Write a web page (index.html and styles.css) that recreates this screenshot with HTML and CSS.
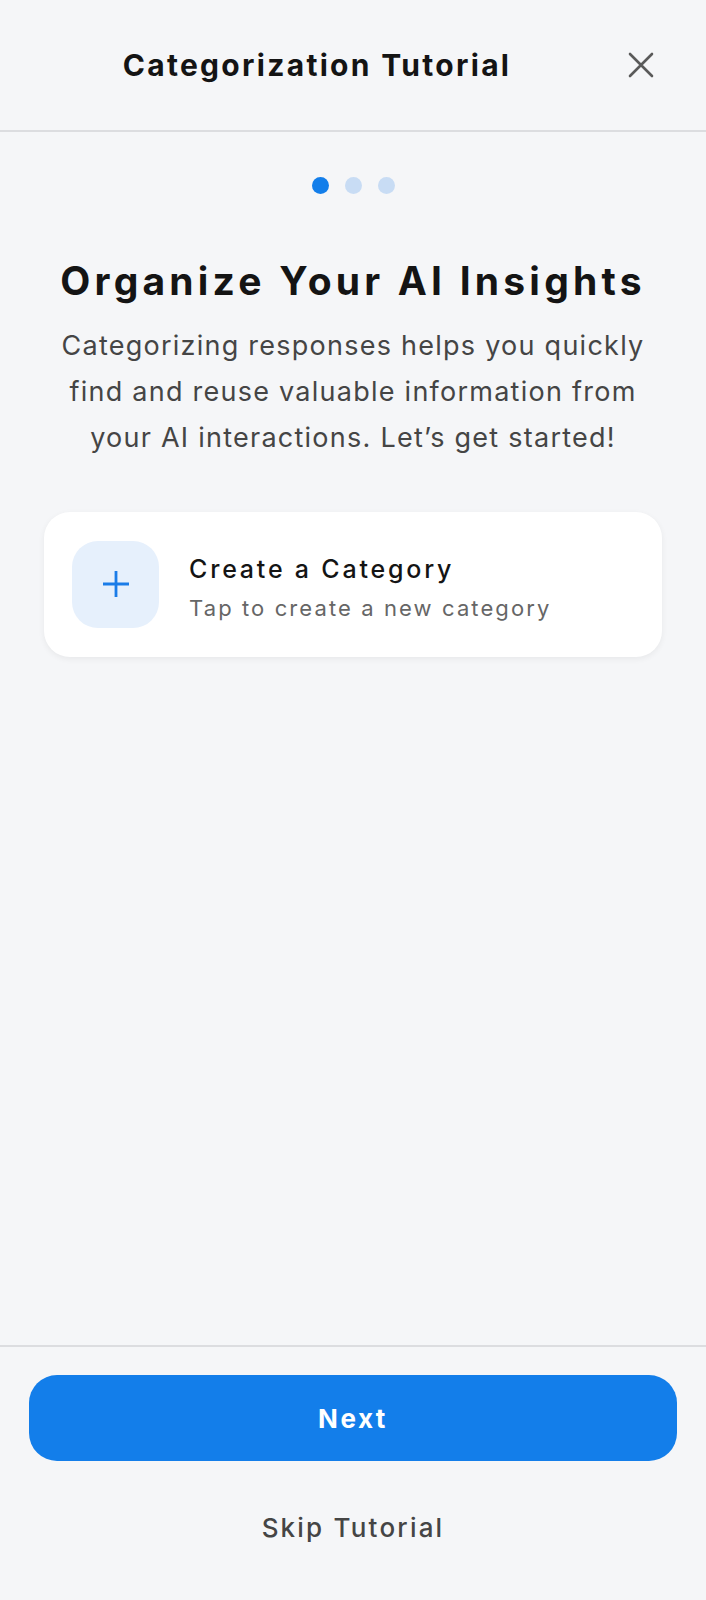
FILE: index.html
```html
<!DOCTYPE html>
<html lang="en">
<head>
<meta charset="utf-8">
<title>Categorization Tutorial</title>
<link rel="stylesheet" href="styles.css">
</head>
<body>
<div class="app">
  <header class="header">
    <h1 class="header-title">Categorization Tutorial</h1>
    <button class="close-btn" aria-label="Close">
      <svg width="28" height="28" viewBox="0 0 28 28" fill="none" stroke="#5a5a5a" stroke-width="2.6" stroke-linecap="round">
        <path d="M3 3 L25 25 M25 3 L3 25"/>
      </svg>
    </button>
  </header>
  <main class="main">
    <div class="dots">
      <span class="dot active"></span>
      <span class="dot"></span>
      <span class="dot"></span>
    </div>
    <h2 class="heading">Organize Your AI Insights</h2>
    <p class="lead">Categorizing responses helps you quickly find and reuse valuable information from your AI interactions. Let’s get started!</p>
    <div class="card">
      <div class="card-icon">
        <svg width="28" height="28" viewBox="0 0 28 28" fill="none" stroke="#1a7ce8" stroke-width="2.8" stroke-linecap="butt">
          <path d="M14 1 V27 M1 14 H27"/>
        </svg>
      </div>
      <div class="card-text">
        <div class="card-title">Create a Category</div>
        <div class="card-sub">Tap to create a new category</div>
      </div>
    </div>
  </main>
  <footer class="footer">
    <button class="next-btn">Next</button>
    <button class="skip-btn">Skip Tutorial</button>
  </footer>
</div>
</body>
</html>
```

FILE: styles.css
```css
* { box-sizing: border-box; }
html, body {
  margin: 0;
  padding: 0;
  background: #f5f6f8;
}
body {
  font-family: "Inter", "Noto Sans", sans-serif;
  color: #141414;
}
.app {
  height: 1600px;
  display: flex;
  flex-direction: column;
}
.header {
  height: 132px;
  border-bottom: 2px solid #dcdde0;
  display: flex;
  align-items: center;
  padding: 0 34px 0 24px;
}
.header-title {
  flex: 1;
  margin: 0;
  text-align: center;
  font-size: 30px;
  font-weight: 700;
  letter-spacing: 2.3px;
  color: #141414;
}
.close-btn {
  width: 62px;
  height: 28px;
  padding: 0;
  border: none;
  background: none;
  display: flex;
  justify-content: center;
}
.main {
  flex: 1;
  display: flex;
  flex-direction: column;
  align-items: center;
  padding: 45px 44px 0;
}
.dots {
  display: flex;
  gap: 16px;
}
.dot {
  width: 17px;
  height: 17px;
  border-radius: 50%;
  background: #c8dcf4;
}
.dot.active {
  background: #137eea;
}
.heading {
  margin: 64px 0 0;
  font-size: 39px;
  font-weight: 700;
  letter-spacing: 4.2px;
  line-height: 1.2;
  text-align: center;
  color: #141414;
}
.lead {
  margin: 18px 0 0;
  width: 610px;
  font-size: 27px;
  letter-spacing: 1.25px;
  line-height: 46px;
  text-align: center;
  color: #454545;
}
.card {
  margin-top: 51px;
  width: 618px;
  height: 145px;
  background: #fff;
  border-radius: 26px;
  box-shadow: 0 2px 6px rgba(0,0,0,0.06);
  display: flex;
  align-items: center;
  padding: 0 28px;
  gap: 30px;
}
.card-icon {
  width: 87px;
  height: 87px;
  border-radius: 26px;
  background: #e6f0fc;
  display: flex;
  align-items: center;
  justify-content: center;
}
.card-text {
  display: flex;
  flex-direction: column;
  gap: 11px;
  padding-top: 6px;
}
.card-title {
  font-size: 25px;
  font-weight: 500;
  letter-spacing: 2.8px;
  color: #141414;
}
.card-sub {
  font-size: 22px;
  letter-spacing: 2.1px;
  color: #666;
}
.footer {
  height: 255px;
  border-top: 2px solid #dcdde0;
  display: flex;
  flex-direction: column;
  align-items: center;
  padding: 28px 29px 0;
}
.next-btn {
  width: 100%;
  height: 86px;
  border: none;
  border-radius: 28px;
  background: #137eea;
  color: #fff;
  font-family: inherit;
  font-size: 26px;
  font-weight: 700;
  letter-spacing: 2.5px;
}
.skip-btn {
  margin-top: 50px;
  border: none;
  background: none;
  font-family: inherit;
  font-size: 26px;
  font-weight: 500;
  letter-spacing: 2.2px;
  color: #454545;
}
```
